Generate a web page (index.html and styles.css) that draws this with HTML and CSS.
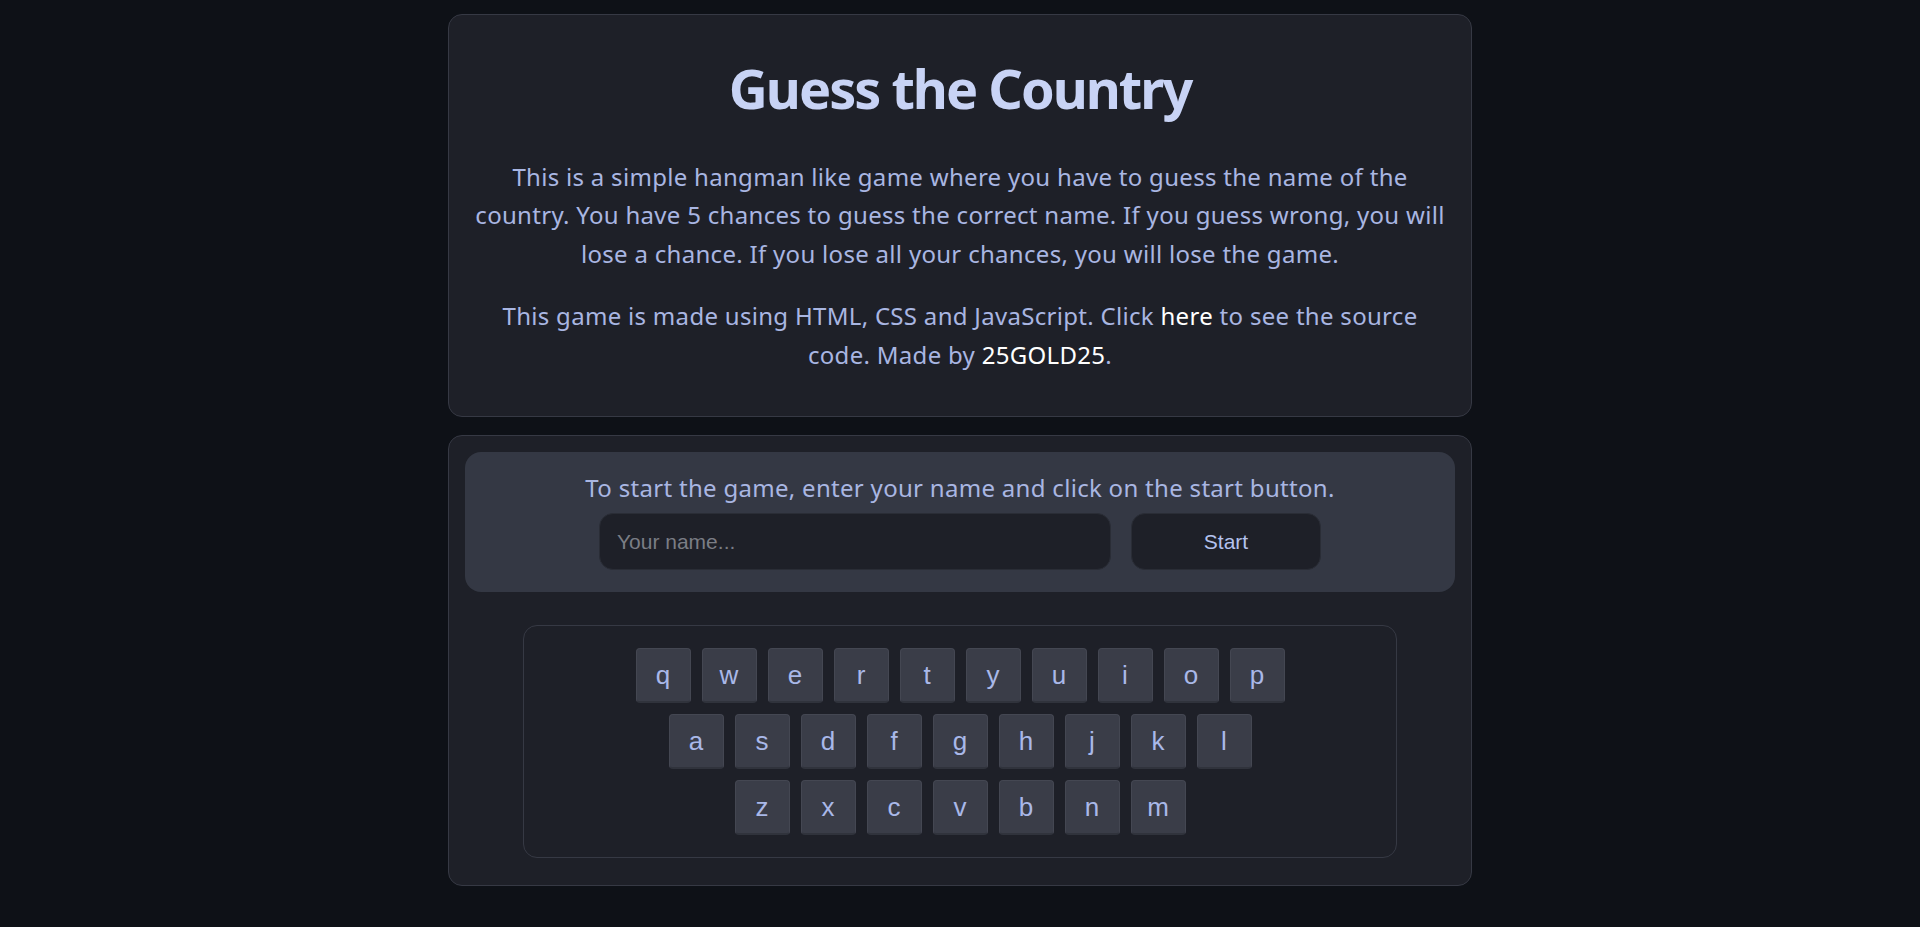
FILE: index.html
```html
<!DOCTYPE html>
<html lang="en">
<head>
<meta charset="utf-8">
<title>Guess the Country</title>
<link rel="stylesheet" href="styles.css">
</head>
<body>
<main class="page">
  <section class="card intro">
    <h1 class="title">Guess the Country</h1>
    <p class="text">This is a simple hangman like game where you have to guess the name of the country. You have 5 chances to guess the correct name. If you guess wrong, you will lose a chance. If you lose all your chances, you will lose the game.</p>
    <p class="text">This game is made using HTML, CSS and JavaScript. Click <a class="link" href="#">here</a> to see the source code. Made by <a class="link" href="#">25GOLD25</a>.</p>
  </section>
  <section class="card game">
    <div class="start-box">
      <p class="start-text">To start the game, enter your name and click on the start button.</p>
      <div class="start-row">
        <input class="name-input" type="text" placeholder="Your name...">
        <button class="start-btn">Start</button>
      </div>
    </div>
    <div class="keyboard">
      <div class="key-row">
        <button class="key">q</button><button class="key">w</button><button class="key">e</button><button class="key">r</button><button class="key">t</button><button class="key">y</button><button class="key">u</button><button class="key">i</button><button class="key">o</button><button class="key">p</button>
      </div>
      <div class="key-row">
        <button class="key">a</button><button class="key">s</button><button class="key">d</button><button class="key">f</button><button class="key">g</button><button class="key">h</button><button class="key">j</button><button class="key">k</button><button class="key">l</button>
      </div>
      <div class="key-row">
        <button class="key">z</button><button class="key">x</button><button class="key">c</button><button class="key">v</button><button class="key">b</button><button class="key">n</button><button class="key">m</button>
      </div>
    </div>
  </section>
</main>
</body>
</html>
```

FILE: styles.css
```css
* { box-sizing: border-box; }

html, body {
  margin: 0;
  padding: 0;
  background: #0e1117;
  height: 100%;
}

body {
  font-family: "Noto Sans", "Open Sans", sans-serif;
  color: #a9b6e2;
}

.page {
  width: 1024px;
  margin: 14px auto 0;
  display: flex;
  flex-direction: column;
  gap: 18px;
}

.card {
  background: #1e2028;
  border: 1px solid #363944;
  border-radius: 14px;
}

.intro {
  padding: 40px 22px 42px;
  text-align: center;
}

.title {
  margin: 0 0 36px;
  font-size: 54px;
  line-height: 67px;
  font-weight: 700;
  letter-spacing: -2px;
  color: #c8d3f5;
}

.text {
  margin: 0 0 24px;
  font-size: 24px;
  line-height: 38.4px;
  letter-spacing: 0.3px;
}

.text:last-child { margin-bottom: 0; }

.link {
  color: #ffffff;
  text-decoration: none;
}

.game {
  padding: 16px 16px 27px;
  display: flex;
  flex-direction: column;
  align-items: center;
}

.start-box {
  width: 100%;
  background: #343844;
  border-radius: 16px;
  padding: 18px 16px 22px;
  display: flex;
  flex-direction: column;
  align-items: center;
  gap: 7px;
}

.start-text {
  margin: 0;
  font-size: 24px;
  line-height: 36px;
  letter-spacing: 0.3px;
}

.start-row {
  display: flex;
  gap: 20px;
}

.name-input {
  width: 512px;
  height: 57px;
  background: #1e2028;
  border: 1px solid #2a2d36;
  border-radius: 14px;
  padding: 0 17px;
  font-family: "Liberation Sans", Arial, sans-serif;
  font-size: 21px;
  color: #c0c8e0;
  outline: none;
}

.name-input::placeholder { color: #7a7d85; }

.start-btn {
  width: 190px;
  height: 57px;
  background: #1e2028;
  border: 1px solid #2a2d36;
  border-radius: 14px;
  font-family: "Liberation Sans", Arial, sans-serif;
  font-size: 21px;
  color: #b4c2ee;
}

.keyboard {
  margin-top: 33px;
  width: 874px;
  border: 1px solid #363944;
  border-radius: 14px;
  padding: 22px;
  display: flex;
  flex-direction: column;
  align-items: center;
  gap: 11px;
}

.key-row {
  display: flex;
  gap: 11px;
}

.key {
  width: 55px;
  height: 55px;
  padding: 0;
  background: #3a3d48;
  border: 1px solid #444752;
  border-bottom: 2px solid #30333c;
  border-radius: 4px;
  font-family: "Liberation Sans", Arial, sans-serif;
  font-size: 26px;
  color: #a9b8e8;
}
```
